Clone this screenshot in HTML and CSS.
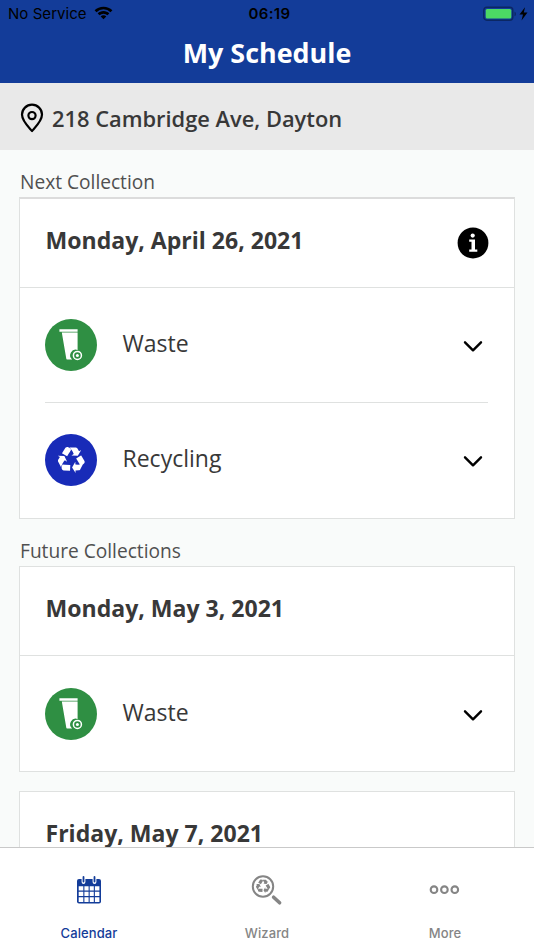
FILE: index.html
```html
<!DOCTYPE html>
<html lang="en">
<head>
<meta charset="utf-8">
<title>My Schedule</title>
<link rel="stylesheet" href="styles.css">
</head>
<body>
<svg class="defs" aria-hidden="true">
  <defs>
    <path id="recycle" d="M836 1169l-15 368-2 22-420-29q-36-3-67-31.500t-47-65.500q-11-27-14.500-55t4-65 12-55 21.500-64 19-53q78 12 509 28zM449 583l180 379-147-92q-63 72-111.500 144.500t-72.500 125-39.500 94.500-18.500 63l-4 21-190-357q-17-26-18-56t6-47l8-18q35-63 114-188l-140-86zM1680 1093l-188 359q-12 29-36.500 46.500t-43.500 20.500l-18 4q-71 7-219 12l8 164-230-367 211-362 7 173q170 16 283 5t170-33zM895 176q-47 63-265 435l-317-187-19-12 225-356q20-31 60-45t80-10q24 2 48.500 12t42 21 41.500 33 36 34.500 36 39.500 32 35zM1550 551l212 363q18 37 12.500 76t-27.500 74q-13 20-33 37t-38 28-48.500 22-47 16-51.500 14-46 12q-34-72-265-436l313-195zM1407 279l142-83-220 373-419-20 151-86q-34-89-75-166t-75.500-123.500-64.500-80-47-46.500l-17-13 405 1q31-3 58 10.500t39 28.500l11 15q39 61 112 190z"/>
    <g id="bin">
      <path d="M14.400 10.200H32.600V12.800H14.400Z"/>
      <path d="M16.800 13.600H32.600V31A5.600 5.600 0 0 0 27.200 40.600H22Q21.400 40.600 21.300 39.800Z"/>
      <circle cx="32.400" cy="36.400" r="4" fill="none" stroke="#fff" stroke-width="1.500"/>
      <circle cx="32.400" cy="36.400" r="1.500"/>
    </g>
    <path id="chevron" d="M2 2.300 10 10.300 18 2.300" fill="none" stroke="#000" stroke-width="2.400" stroke-linecap="round" stroke-linejoin="round"/>
  </defs>
</svg>
<div class="app">
  <header class="header">
    <div class="status">
      <div class="carrier"><span>No Service</span>
        <svg width="19" height="14" viewBox="0 0 19 14"><path d="M9.500.8C6 .8 2.900 2.100.6 4.300L2.500 6.200A10 10 0 0 1 16.500 6.200L18.400 4.300C16.100 2.100 13 .8 9.500.8ZM9.500 5.100C7.200 5.100 5.200 6 3.700 7.400L5.600 9.300A5.600 5.600 0 0 1 13.400 9.300L15.300 7.400C13.800 6 11.800 5.100 9.500 5.100ZM9.500 9.200Q7.900 9.200 6.700 10.400L9.500 13.200 12.300 10.400Q11.100 9.200 9.500 9.200Z"/></svg>
      </div>
      <div class="time">06:19</div>
      <svg class="battery" width="46" height="16" viewBox="0 0 46 16">
        <rect x=".8" y="1.200" width="29" height="13" rx="3" fill="none" stroke="#0b2763" stroke-width="1.400"/>
        <rect x="2.700" y="3" width="25.600" height="9.600" rx="1.500" fill="#4cd964"/>
        <path d="M31.500 5.500Q33 6 33 8T31.500 10.300Z" fill="#0b2763"/>
        <path d="M42 1.200 36.500 8.500H40L38.500 14.500 44.500 6.600H40.800Z"/>
      </svg>
    </div>
    <h1 class="title">My Schedule</h1>
  </header>
  <div class="address">
    <svg width="24" height="30" viewBox="0 0 24 30" fill="none" stroke="#000" stroke-width="2.200"><path d="M12 28C10 25.500 2 18.500 2 11.600A10 9.900 0 0 1 22 11.600C22 18.500 14 25.500 12 28Z" stroke-linejoin="round"/><circle cx="12" cy="12.600" r="3.600"/></svg>
    <span>218 Cambridge Ave, Dayton</span>
  </div>
  <main class="content">
    <h2 class="label">Next Collection</h2>
    <section class="card next">
      <div class="date"><span>Monday, April 26, 2021</span>
        <svg width="32" height="32" viewBox="0 0 32 32"><circle cx="16" cy="16" r="15.400"/><g fill="#fff"><circle cx="15.700" cy="8.600" r="2.100"/><path d="M12.200 12.600H18V22.600H20.300V24.800H12.200V22.600H14.500V14.800H12.200Z"/></g></svg>
      </div>
      <div class="row first"><svg class="badge green" viewBox="0 0 52 52" fill="#fff"><use href="#bin"/></svg><span>Waste</span><svg class="chevron" viewBox="0 0 20 13"><use href="#chevron"/></svg></div>
      <div class="row"><svg class="badge blue" viewBox="0 0 52 52" fill="#fff"><use href="#recycle" transform="translate(12.500 13) scale(.0153)"/></svg><span>Recycling</span><svg class="chevron" viewBox="0 0 20 13"><use href="#chevron"/></svg></div>
    </section>
    <h2 class="label future">Future Collections</h2>
    <section class="card">
      <div class="date"><span>Monday, May 3, 2021</span></div>
      <div class="row"><svg class="badge green" viewBox="0 0 52 52" fill="#fff"><use href="#bin"/></svg><span>Waste</span><svg class="chevron" viewBox="0 0 20 13"><use href="#chevron"/></svg></div>
    </section>
    <section class="card">
      <div class="date"><span>Friday, May 7, 2021</span></div>
    </section>
  </main>
  <nav class="tabs">
    <a class="tab active">
      <svg width="32" height="32" viewBox="0 0 32 32"><rect x="4" y="5" width="24" height="24.500" rx="2" fill="#133c99"/><path d="M5.700 12.300H10.300V16.500H5.700ZM11.400 12.300H15.600V16.500H11.400ZM16.700 12.300H20.800V16.500H16.700ZM21.900 12.300H26.400V16.500H21.900ZM5.700 17.700H10.300V22.100H5.700ZM11.400 17.700H15.600V22.100H11.400ZM16.700 17.700H20.800V22.100H16.700ZM21.900 17.700H26.400V22.100H21.900ZM5.700 23.300H10.300V28H5.700ZM11.400 23.300H15.600V28H11.400ZM16.700 23.300H20.800V28H16.700ZM21.900 23.300H26.400V28H21.900Z" fill="#fff"/><path d="M10.500 4V8M21.500 4V8" stroke="#fff" stroke-width="3.800" stroke-linecap="round"/><path d="M10.500 3V7.500M21.500 3V7.500" stroke="#133c99" stroke-width="1.800" stroke-linecap="round"/></svg>
      <span>Calendar</span>
    </a>
    <a class="tab">
      <svg width="32" height="32" viewBox="0 0 32 32" fill="#858585"><circle cx="12" cy="12.500" r="10.200" fill="none" stroke="#858585" stroke-width="2"/><use href="#recycle" transform="translate(4.800 5.400) scale(.0081)"/><path d="M22.600 23.200 28.600 28.800" stroke="#858585" stroke-width="3.600" stroke-linecap="round"/></svg>
      <span>Wizard</span>
    </a>
    <a class="tab">
      <svg width="32" height="32" viewBox="0 0 32 32" fill="none" stroke="#858585" stroke-width="2.100"><circle cx="5" cy="15.700" r="3.300"/><circle cx="15.400" cy="15.700" r="3.300"/><circle cx="25.800" cy="15.700" r="3.300"/></svg>
      <span>More</span>
    </a>
  </nav>
</div>
</body>
</html>
```

FILE: styles.css
```css
* { box-sizing: border-box; }
body { margin: 0; font-family: "Open Sans", "Noto Sans", sans-serif; color: #383838; }
h1, h2 { margin: 0; }
svg { display: block; flex: none; }
.defs { position: absolute; width: 0; height: 0; }
.app { display: flex; flex-direction: column; height: 950px; overflow: hidden; background: #f9fbfa; }
.header { flex: none; height: 83px; background: #133c99; }
.status { display: grid; grid-template-columns: 1fr auto 1fr; align-items: center; height: 28px; padding: 0 5px 0 8px; font: 15px/28px Inter, sans-serif; color: #000; }
.carrier { display: flex; align-items: center; gap: 7px; letter-spacing: .05px; }
.carrier svg { margin-top: -2px; }
.time { padding-left: 2px; font-weight: 600; letter-spacing: .4px; }
.battery { justify-self: end; margin-top: -1px; }
.title { color: #fff; font-size: 26.900px; font-weight: 700; line-height: 49px; text-align: center; }
.address { flex: none; display: flex; align-items: center; height: 67px; padding: 2px 20px 0; gap: 8px; background: #e9e9e9; font-size: 21.850px; font-weight: 600; }
.address span { margin-top: 1px; }
.content { flex: 1; min-height: 0; overflow: hidden; padding: 0 19px; }
.label { height: 47px; padding: 18px 1px 0; font-size: 19.150px; font-weight: 400; line-height: 28px; color: #505050; }
.card { margin-bottom: 19px; border: 1px solid #dfe1e0; background: #fff; }
.card.next { margin-bottom: 0; border-top: 2px solid #dcdcdc; }
.date { display: flex; align-items: center; justify-content: space-between; height: 89px; padding: 0 25.500px; border-bottom: 1px solid #dfe1e0; font-size: 23.050px; font-weight: 700; }
.date span { margin-top: -7px; }
.row { display: flex; align-items: center; height: 115px; margin: 0 26px 0 25px; font-size: 23px; }
.row.first { height: 114px; }
.row + .row { height: 116px; padding-bottom: 1px; border-top: 1px solid #dfe1e0; }
.row span { flex: 1; margin: -4px 0 0 25.500px; }
.badge { width: 52px; height: 52px; border-radius: 50%; }
.green { background: #2f8f43; }
.blue { background: #182bb8; }
.chevron { width: 20px; height: 13px; margin: 3px 5.500px 0 0; }
.tabs { flex: none; display: grid; grid-template-columns: repeat(3, 1fr); height: 103px; border-top: 1px solid #c9c9c9; background: #fff; }
.tab { display: flex; flex-direction: column; align-items: center; padding-top: 26px; gap: 17px; color: #858585; font: 500 13px/20px Inter, sans-serif; letter-spacing: .1px; }
.active { color: #133c99; }
```
